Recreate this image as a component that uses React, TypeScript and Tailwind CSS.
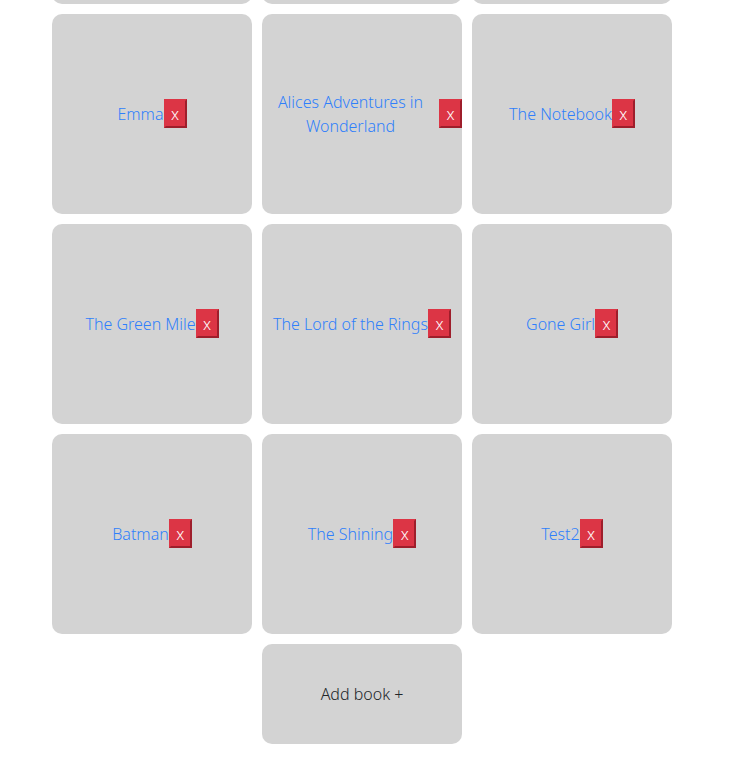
import React from "react";

const books = [
  "Pride and Prejudice",
  "1984",
  "Dracula",
  "Emma",
  "Alices Adventures in Wonderland",
  "The Notebook",
  "The Green Mile",
  "The Lord of the Rings",
  "Gone Girl",
  "Batman",
  "The Shining",
  "Test2",
];

function BookCard({ title }: { title: string }) {
  return (
    <div className="flex h-[200px] w-[200px] items-center justify-center rounded-[10px] bg-[#d3d3d3]">
      <a href="#" className="text-center text-[16px] font-light leading-[24px] text-[#2f7ffb]">
        {title}
      </a>
      <button
        type="button"
        className="-mt-[1px] h-[29px] w-[23px] shrink-0 border-2 border-[#dc3545] border-r-[#9e1e2b] border-b-[#9e1e2b] bg-[#dc3545] text-[16px] font-light leading-[20px] text-white"
      >
        x
      </button>
    </div>
  );
}

export default function App() {
  return (
    <div
      className="min-h-screen bg-white"
      style={{ fontFamily: "'Noto Sans', Lato, sans-serif" }}
    >
      <div className="ml-[52px] mt-[-196px] flex w-[620px] flex-wrap justify-center gap-[10px] pb-[30px]">
        {books.map((b) => (
          <BookCard key={b} title={b} />
        ))}
        <button
          type="button"
          className="flex h-[100px] w-[200px] items-center justify-center rounded-[10px] bg-[#d3d3d3] text-[16px] font-light text-[#212529]"
        >
          Add book +
        </button>
      </div>
    </div>
  );
}
